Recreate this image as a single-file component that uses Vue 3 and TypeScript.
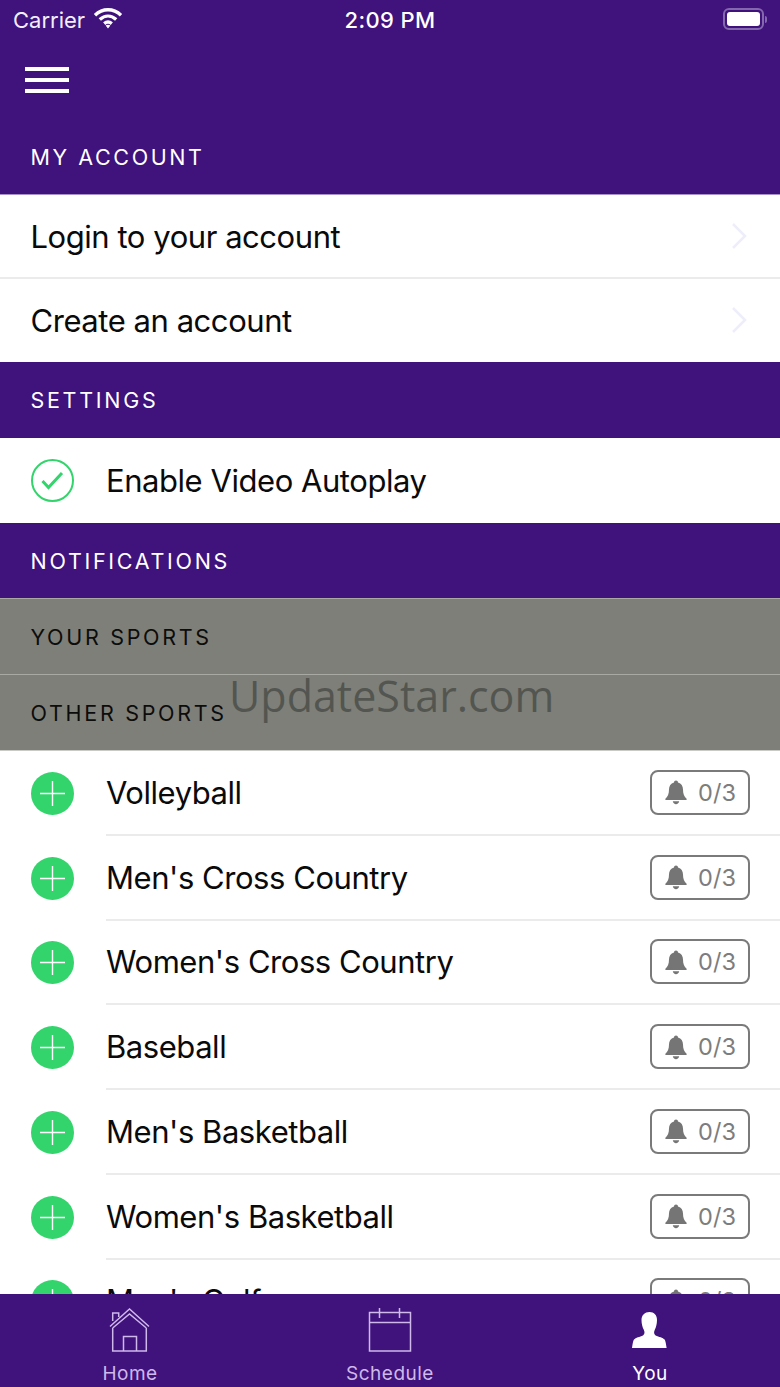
<template>
  <div class="phone">
    <div class="status">
      <div class="carrier">
        <span>Carrier</span>
        <svg viewBox="0 0 30 22" width="30" height="22" aria-hidden="true">
          <path d="M2 8.200C9.600 1 20.400 1 28 8.200" class="wifi" />
          <path d="M6.800 12.600C11.800 8 18.200 8 23.200 12.600" class="wifi" />
          <path d="M11.200 16.600C13.600 14.600 16.400 14.600 18.800 16.600" class="wifi" />
          <path d="M12.600 18.600L15 21.400L17.400 18.600C16 17.400 14 17.400 12.600 18.600Z" fill="#fff" />
        </svg>
      </div>
      <div class="time">2:09 PM</div>
      <div class="battery-wrap">
        <div class="battery"><div class="battery-fill"></div></div>
        <div class="battery-cap"></div>
      </div>
    </div>

    <div class="nav">
      <div class="burger"><i></i><i></i><i></i></div>
    </div>

    <div class="scroll">
      <div class="header head-top">MY ACCOUNT</div>
      <div class="link-row" v-for="(item, i) in accountLinks" :key="item" :class="{ 'has-line': i === 0 }">
        <span class="row-text">{{ item }}</span>
        <svg class="chev" viewBox="0 0 18 28" width="18" height="28" aria-hidden="true">
          <path d="M3 2l12 12L3 26" fill="none" stroke="#eeeefb" stroke-width="2.600" />
        </svg>
      </div>

      <div class="header">SETTINGS</div>
      <div class="sport-row no-line">
        <svg class="round" viewBox="0 0 43 43" width="43" height="43" aria-hidden="true">
          <circle cx="21.500" cy="21.500" r="20.500" fill="none" stroke="#34d46c" stroke-width="2" />
          <path d="M11.500 22l6 6.500L31 14" fill="none" stroke="#34d46c" stroke-width="3" />
        </svg>
        <div class="sport-body"><span class="row-text">Enable Video Autoplay</span></div>
      </div>

      <div class="header notif">NOTIFICATIONS</div>
      <div class="header grey">YOUR SPORTS</div>
      <div class="header grey last">OTHER SPORTS</div>

      <div class="sport-row" v-for="sport in sports" :key="sport">
        <svg class="round" viewBox="0 0 43 43" width="43" height="43" aria-hidden="true">
          <circle cx="21.500" cy="21.500" r="21.500" fill="#34d46c" />
          <path d="M21.500 9v25M9 21.500h25" stroke="#fff" stroke-width="1.400" />
        </svg>
        <div class="sport-body">
          <span class="row-text">{{ sport }}</span>
          <div class="badge">
            <svg viewBox="0 0 24 26" width="24" height="26" aria-hidden="true">
              <path d="M12 1.500c1.200 0 2 .8 2 1.900 3.300.9 5 3.600 5 7.200 0 4.600 1.200 7.200 3.600 9.200v1.200H1.400v-1.200C3.800 17.800 5 15.200 5 10.600c0-3.600 1.700-6.300 5-7.200 0-1.100.8-1.900 2-1.900z" fill="#757575" />
              <path d="M8.800 22.300h6.400c-.3 1.600-1.600 2.900-3.200 2.900s-2.900-1.300-3.200-2.900z" fill="#757575" />
            </svg>
            <span>0/3</span>
          </div>
        </div>
      </div>
    </div>

    <div class="tabs">
      <div class="tab">
        <svg viewBox="0 0 44 44" width="44" height="44" aria-hidden="true">
          <path d="M2 18.500L21.500 1 41 18.500M4.700 20L21.500 6l16.800 14M4.700 20v23h33.600V20M15.500 43V28.500h13V43M4.700 13V5h6v4" fill="none" stroke="#cfb8ea" stroke-width="1.500" />
        </svg>
        <span>Home</span>
      </div>
      <div class="tab">
        <svg viewBox="0 0 44 44" width="44" height="44" aria-hidden="true">
          <path d="M1.500 4.500h41v38.500h-41zM1.500 14.500h41M11.500 0v10M31.500 0v10" fill="none" stroke="#cfb8ea" stroke-width="1.500" />
        </svg>
        <span>Schedule</span>
      </div>
      <div class="tab active">
        <svg viewBox="0 0 44 44" width="44" height="44" aria-hidden="true">
          <path d="M21.500 4c4.600 0 7.500 3 7.500 8 0 3.800-.9 7.200-2.200 9.800-1.100 2.200-1 4.500.8 5.600 3.200 1.900 7.300 1.700 9 4.200.9 1.400 1.500 4.500 2 8.400H4c.5-3.900 1.100-7 2-8.400 1.700-2.500 5.800-2.300 9-4.200 1.800-1.100 1.900-3.400.8-5.600C14.400 19.200 13.500 15.800 13.500 12c0-5 3.400-8 8-8z" fill="#fff" />
        </svg>
        <span>You</span>
      </div>
    </div>

    <div class="watermark">UpdateStar.com</div>
  </div>
</template>

<script setup lang="ts">
const accountLinks: string[] = ['Login to your account', 'Create an account']

const sports: string[] = [
  'Volleyball',
  "Men's Cross Country",
  "Women's Cross Country",
  'Baseball',
  "Men's Basketball",
  "Women's Basketball",
  "Men's Golf",
]
</script>

<style>
body { margin: 0; }
</style>

<style scoped>
.phone {
  position: relative;
  width: 780px;
  height: 1387px;
  display: flex;
  flex-direction: column;
  overflow: hidden;
  background: #fff;
  font-family: Inter, "Liberation Sans", sans-serif;
  color: #0a0a0a;
}

.status {
  flex: none;
  height: 40px;
  background: #3f127c;
  color: #fff;
  display: grid;
  grid-template-columns: 1fr auto 1fr;
  align-items: center;
  padding: 0 13px;
  font-size: 22px;
}
.carrier { display: flex; align-items: center; gap: 8px; font-weight: 400; color: #f3eefa; }
.carrier svg { margin-top: -4px; }
.wifi { fill: none; stroke: #fff; stroke-width: 3.400; }
.time { font-weight: 500; letter-spacing: 0.4px; }
.battery-wrap { justify-self: end; display: flex; align-items: center; gap: 1px; margin-top: -2px; }
.battery {
  width: 41px;
  height: 22px;
  box-sizing: border-box;
  border: 2px solid #8468ae;
  border-radius: 6px;
  padding: 2px;
}
.battery-fill { height: 100%; background: #fff; border-radius: 3px; }
.battery-cap { width: 2px; height: 7px; background: #8468ae; border-radius: 0 2px 2px 0; }

.nav {
  flex: none;
  height: 80px;
  background: #3f127c;
  display: flex;
  align-items: center;
  padding-left: 25px;
}
.burger { width: 44px; display: flex; flex-direction: column; gap: 7px; }
.burger i { display: block; height: 4px; background: #fff; }

.scroll { flex: 1; min-height: 0; overflow: hidden; }

.header {
  height: 75.500px;
  box-sizing: border-box;
  background: #3f127c;
  color: #fff;
  padding-left: 30.500px;
  display: flex;
  align-items: center;
  font-size: 21.500px;
  font-weight: 400;
  letter-spacing: 2.700px;
}
.head-top { height: 75px; border-bottom: 1px solid #a991cc; letter-spacing: 2.600px; }
.notif { padding-top: 1px; }
.grey {
  height: 76px;
  padding-top: 1px;
  background: #7e7f78;
  color: #0c0c0c;
  border-top: 1px solid #a8a9a3;
}
.last { height: 77px; border-bottom: 1px solid #c9c9c5; }

.link-row {
  height: 83px;
  box-sizing: border-box;
  padding: 0 32px 1px 30.500px;
  display: flex;
  align-items: center;
  justify-content: space-between;
}
.has-line { border-bottom: 2px solid #ebebeb; height: 84px; padding-bottom: 0; }
.row-text { font-size: 31px; font-weight: 400; letter-spacing: -0.45px; }

.sport-row {
  height: 84.750px;
  box-sizing: border-box;
  padding-left: 31px;
  display: flex;
  align-items: center;
  gap: 32px;
}
.no-line { height: 85px; }
.round { flex: none; }
.sport-body {
  flex: 1;
  height: 100%;
  box-sizing: border-box;
  display: flex;
  align-items: center;
  justify-content: space-between;
  padding-right: 30px;
  border-bottom: 2px solid #ebebeb;
}
.no-line .sport-body { border-bottom: none; }

.badge {
  width: 100px;
  height: 45px;
  box-sizing: border-box;
  border: 2px solid #7a7a7a;
  border-radius: 8px;
  display: flex;
  align-items: center;
  justify-content: center;
  gap: 10px;
  color: #7d7d7d;
  font-size: 23.500px;
}

.tabs {
  flex: none;
  height: 93px;
  background: #3f127c;
  display: grid;
  grid-template-columns: repeat(3, 1fr);
  position: relative;
}
.tab {
  display: flex;
  flex-direction: column;
  align-items: center;
  padding-top: 14px;
  color: #cfb8ea;
  font-size: 19px;
  font-weight: 400;
  letter-spacing: 0.5px;
}
.tab span { margin-top: 10px; }
.tab.active { color: #fff; }

.watermark {
  position: absolute;
  left: 229px;
  top: 666px;
  font-family: "Open Sans", sans-serif;
  font-size: 43px;
  line-height: 60px;
  color: rgba(40, 44, 40, 0.5);
  pointer-events: none;
}
</style>
